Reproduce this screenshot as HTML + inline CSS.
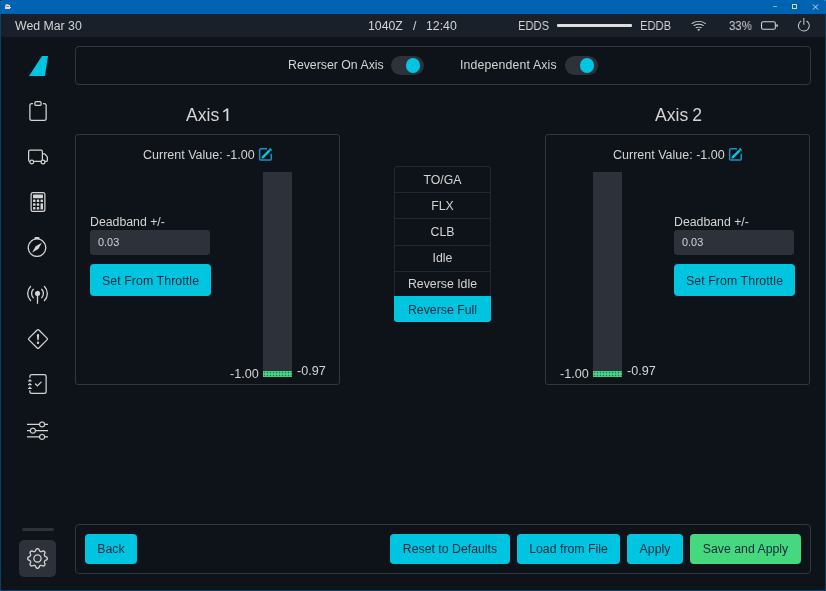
<!DOCTYPE html>
<html><head><meta charset="utf-8">
<style>
*{margin:0;padding:0;box-sizing:border-box}
html,body{width:826px;height:591px;overflow:hidden;background:#0e1219;font-family:"Liberation Sans",sans-serif;color:#d4d4d4}
.a{position:absolute}
.t{position:absolute;white-space:nowrap;line-height:1;will-change:transform}
#win{position:absolute;left:0;top:0;width:826px;height:591px;background:#0e1219}
.panel{position:absolute;border:1px solid #303743;border-radius:4px}
.cyan{background:#00c5e1}
.btn{position:absolute;border-radius:4px;color:#0c2a3f;font-size:12.3px;text-align:center;white-space:nowrap;will-change:transform}
.ico{position:absolute;fill:#d4d4d4}
.sep{position:absolute;left:1px;width:95px;height:1px;background:#232933}
.dl{position:absolute;left:0;width:97px;text-align:center;font-size:12.3px;line-height:1;white-space:nowrap;will-change:transform}
.grn{position:absolute;background-color:#45d87e;background-image:radial-gradient(circle at 1.5px 1.5px,#1f7a6a 0.7px,transparent 1.1px);background-size:3px 3px;background-position:0 0}
</style></head><body>
<div id="win">
<div class="a" style="left:0;top:0;width:826px;height:14px;background:#0063b1"></div>
<div class="a" style="left:0;top:14px;width:1px;height:577px;background:#0b3f66"></div>
<div class="a" style="left:825px;top:14px;width:1px;height:577px;background:#0b3f66"></div>
<div class="a" style="left:0;top:590px;width:826px;height:1px;background:#0b3f66"></div>
<div class="a" style="left:1px;top:14px;width:824px;height:23px;background:#19202a"></div>

<!-- title bar glyphs -->
<svg class="a" style="left:0;top:0" width="826" height="14">
<rect x="5" y="5" width="5" height="4" fill="#e8ddd0"/><rect x="10" y="7" width="1" height="1" fill="#c8c8c8"/><rect x="5.5" y="4" width="3" height="1" fill="#b8b0a8"/><rect x="5" y="5" width="1" height="1" fill="#3ac0c0"/><rect x="6" y="6" width="3" height="1" fill="#8a8580"/><rect x="0" y="0" width="1" height="1" fill="#1a2a3a"/><rect x="824" y="0" width="1" height="1" fill="#30b0c0"/>
<rect x="773" y="6" width="4" height="1" fill="#3ccfd0"/>
<rect x="792.5" y="4.5" width="4" height="4" fill="none" stroke="#d8d0c8" stroke-width="1"/>
<path d="M813 4.5L818 9.5M818 4.5L813 9.5" stroke="#c8e8e0" stroke-width="1"/>
</svg>

<!-- status bar -->
<div class="t" style="left:15px;top:20px;font-size:12.3px">Wed Mar 30</div>
<div class="t" style="left:368px;top:20px;font-size:12.3px">1040Z</div>
<div class="t" style="left:413px;top:20px;font-size:12.3px">/</div>
<div class="t" style="left:426px;top:20px;font-size:12.3px">12:40</div>
<div class="t" style="left:518px;top:20px;font-size:12.3px;transform:scaleX(0.91);transform-origin:0 0">EDDS</div>
<div class="a" style="left:557px;top:24px;width:75px;height:2.5px;background:#dedede;border-radius:1px"></div>
<div class="t" style="left:640px;top:20px;font-size:12.3px;transform:scaleX(0.91);transform-origin:0 0">EDDB</div>
<div class="t" style="left:728.5px;top:20px;font-size:12.3px;transform:scaleX(0.93);transform-origin:0 0">33%</div>

<!-- top panel -->
<div class="panel" style="left:75px;top:46px;width:736px;height:39px"></div>
<div class="t" style="left:288px;top:59px;font-size:12.3px">Reverser On Axis</div>
<div class="a" style="left:391px;top:56px;width:32.5px;height:19px;border-radius:10px;background:#2c313a"></div>
<div class="a cyan" style="left:405.8px;top:58.3px;width:14.5px;height:14.5px;border-radius:50%"></div>
<div class="t" style="left:460px;top:59px;font-size:12.3px;letter-spacing:0.15px">Independent Axis</div>
<div class="a" style="left:565px;top:56px;width:32.5px;height:19px;border-radius:10px;background:#2c313a"></div>
<div class="a cyan" style="left:579.8px;top:58.3px;width:14.5px;height:14.5px;border-radius:50%"></div>

<!-- Axis 1 -->
<div class="t" style="left:186px;top:107px;font-size:17.6px">Axis</div><svg class="a" style="left:220px;top:104px" width="12" height="20" viewBox="220 104 12 20"><rect x="226.5" y="108.5" width="1.8" height="12.5" fill="#d9d9d9"/><path d="M227.2 109.2L223.3 111.9" stroke="#d9d9d9" stroke-width="1.6"/></svg>
<div class="panel" style="left:75px;top:134px;width:265px;height:251px;border-radius:3px"></div>
<div class="t" style="left:142.5px;top:149px;font-size:12.5px">Current Value: -1.00</div>
<svg class="a" style="left:258px;top:146px" width="16" height="16" viewBox="0 0 16 16">
<path d="M9 2.65H2.9A1.25 1.25 0 0 0 1.65 3.9V12.8A1.25 1.25 0 0 0 2.9 14.05H12A1.25 1.25 0 0 0 13.25 12.8V7.8" fill="none" stroke="#1592c4" stroke-width="1.5"/>
<path d="M4.7 11.3L10.9 5.1" stroke="#00c8e6" stroke-width="2.4" stroke-linecap="round"/>
<path d="M12 1.9L14.1 4L13 5.1L10.9 3Z" fill="#00c8e6"/>
</svg>
<div class="a" style="left:263px;top:172px;width:29px;height:205px;background:#2c313a"></div>
<div class="grn" style="left:263px;top:371px;width:29px;height:6px"></div>
<div class="t" style="left:230px;top:368px;font-size:12.6px">-1.00</div>
<div class="t" style="left:297px;top:365px;font-size:12.6px">-0.97</div>
<div class="t" style="left:90px;top:216px;font-size:12.3px">Deadband +/-</div>
<div class="a" style="left:90px;top:230px;width:120px;height:25px;background:#2c313a;border-radius:3px"></div>
<div class="t" style="left:98px;top:237px;font-size:10.9px">0.03</div>
<div class="btn cyan" style="left:90px;top:264px;width:121px;height:32px;line-height:34px;letter-spacing:0.1px">Set From Throttle</div>

<!-- Axis 2 -->
<div class="t" style="left:655px;top:107px;font-size:17.6px;word-spacing:-1px">Axis 2</div>
<div class="panel" style="left:545px;top:134px;width:265px;height:251px;border-radius:3px"></div>
<div class="t" style="left:612.5px;top:149px;font-size:12.5px">Current Value: -1.00</div>
<svg class="a" style="left:728px;top:146px" width="16" height="16" viewBox="0 0 16 16">
<path d="M9 2.65H2.9A1.25 1.25 0 0 0 1.65 3.9V12.8A1.25 1.25 0 0 0 2.9 14.05H12A1.25 1.25 0 0 0 13.25 12.8V7.8" fill="none" stroke="#1592c4" stroke-width="1.5"/>
<path d="M4.7 11.3L10.9 5.1" stroke="#00c8e6" stroke-width="2.4" stroke-linecap="round"/>
<path d="M12 1.9L14.1 4L13 5.1L10.9 3Z" fill="#00c8e6"/>
</svg>
<div class="a" style="left:593px;top:172px;width:29px;height:205px;background:#2c313a"></div>
<div class="grn" style="left:593px;top:371px;width:29px;height:6px"></div>
<div class="t" style="left:560px;top:368px;font-size:12.6px">-1.00</div>
<div class="t" style="left:627px;top:365px;font-size:12.6px">-0.97</div>
<div class="t" style="left:674px;top:216px;font-size:12.3px">Deadband +/-</div>
<div class="a" style="left:674px;top:230px;width:120px;height:25px;background:#2c313a;border-radius:3px"></div>
<div class="t" style="left:682px;top:237px;font-size:10.9px">0.03</div>
<div class="btn cyan" style="left:674px;top:264px;width:121px;height:32px;line-height:34px;letter-spacing:0.1px">Set From Throttle</div>

<!-- detents -->
<div class="a" style="left:394px;top:166px;width:97px;height:156px;border:1px solid #232933;border-radius:3px"></div>
<div class="a" style="left:394px;top:166px;width:97px;height:156px">
<div class="dl" style="top:8.0px">TO/GA</div>
<div class="dl" style="top:33.8px">FLX</div>
<div class="sep" style="top:26.3px"></div>
<div class="dl" style="top:59.9px">CLB</div>
<div class="sep" style="top:52.4px"></div>
<div class="dl" style="top:86.0px">Idle</div>
<div class="sep" style="top:78.5px"></div>
<div class="dl" style="top:112.1px">Reverse Idle</div>
<div class="sep" style="top:104.6px"></div>
<div class="btn cyan" style="left:0;top:130px;width:97px;height:26px;line-height:29px;border-radius:0 0 3px 3px">Reverse Full</div>
</div>

<!-- bottom panel -->
<div class="panel" style="left:75px;top:524px;width:736px;height:50px"></div>
<div class="btn cyan" style="left:85px;top:534px;width:52px;height:30px;line-height:31px">Back</div>
<div class="btn cyan" style="left:390px;top:534px;width:120px;height:30px;line-height:31px">Reset to Defaults</div>
<div class="btn cyan" style="left:517px;top:534px;width:103px;height:30px;line-height:31px">Load from File</div>
<div class="btn cyan" style="left:627px;top:534px;width:56px;height:30px;line-height:31px">Apply</div>
<div class="btn" style="left:690px;top:534px;width:111px;height:30px;line-height:31px;background:#45d87e">Save and Apply</div>

<!-- sidebar -->
<svg class="a" style="left:0;top:0" width="60" height="80"><path d="M42 56H48L45 76H29Z" fill="#00c5e1"/></svg>
<div class="a" style="left:22px;top:528px;width:32px;height:3px;background:#2c313a;border-radius:2px"></div>
<div class="a" style="left:19px;top:540px;width:37px;height:37px;background:#2c313a;border-radius:5px"></div>
<!-- sidebar icons -->
<svg class="ico" style="left:27.5px;top:101px" width="20" height="20" viewBox="0 0 16 16"><path d="M4 1.5H3a2 2 0 0 0-2 2V14a2 2 0 0 0 2 2h10a2 2 0 0 0 2-2V3.5a2 2 0 0 0-2-2h-1v1h1a1 1 0 0 1 1 1V14a1 1 0 0 1-1 1H3a1 1 0 0 1-1-1V3.5a1 1 0 0 1 1-1h1v-1z"/><path d="M9.5 1a.5.5 0 0 1 .5.5v1a.5.5 0 0 1-.5.5h-3a.5.5 0 0 1-.5-.5v-1a.5.5 0 0 1 .5-.5h3zm-3-1A1.5 1.5 0 0 0 5 1.5v1A1.5 1.5 0 0 0 6.5 4h3A1.5 1.5 0 0 0 11 2.5v-1A1.5 1.5 0 0 0 9.5 0h-3z"/></svg>
<svg class="ico" style="left:27.5px;top:146.5px" width="20" height="20" viewBox="0 0 16 16"><path d="M0 3.5A1.5 1.5 0 0 1 1.5 2h9A1.5 1.5 0 0 1 12 3.5V5h1.02a1.5 1.5 0 0 1 1.17.563l1.481 1.85a1.5 1.5 0 0 1 .329.938V10.5a1.5 1.5 0 0 1-1.5 1.5H14a2 2 0 1 1-4 0H5a2 2 0 1 1-3.998-.085A1.5 1.5 0 0 1 0 10.5v-7zm1.294 7.456A1.999 1.999 0 0 1 4.732 11h5.536a2.01 2.01 0 0 1 .732-.732V3.5a.5.5 0 0 0-.5-.5h-9a.5.5 0 0 0-.5.5v7a.5.5 0 0 0 .294.456zM12 10a2 2 0 0 1 1.732 1h.768a.5.5 0 0 0 .5-.5V8.35a.5.5 0 0 0-.11-.312l-1.48-1.85A.5.5 0 0 0 13.02 6H12v4zm-9 1a1 1 0 1 0 0 2 1 1 0 0 0 0-2zm9 0a1 1 0 1 0 0 2 1 1 0 0 0 0-2z"/></svg>
<svg class="ico" style="left:27.6px;top:192px" width="20" height="20" viewBox="0 0 16 16"><path d="M12 1a1 1 0 0 1 1 1v12a1 1 0 0 1-1 1H4a1 1 0 0 1-1-1V2a1 1 0 0 1 1-1h8zM4 0a2 2 0 0 0-2 2v12a2 2 0 0 0 2 2h8a2 2 0 0 0 2-2V2a2 2 0 0 0-2-2H4z"/><path d="M4 2.5a.5.5 0 0 1 .5-.5h7a.5.5 0 0 1 .5.5v2a.5.5 0 0 1-.5.5h-7a.5.5 0 0 1-.5-.5v-2zm0 4a.5.5 0 0 1 .5-.5h1a.5.5 0 0 1 .5.5v1a.5.5 0 0 1-.5.5h-1a.5.5 0 0 1-.5-.5v-1zm0 3a.5.5 0 0 1 .5-.5h1a.5.5 0 0 1 .5.5v1a.5.5 0 0 1-.5.5h-1a.5.5 0 0 1-.5-.5v-1zm0 3a.5.5 0 0 1 .5-.5h1a.5.5 0 0 1 .5.5v1a.5.5 0 0 1-.5.5h-1a.5.5 0 0 1-.5-.5v-1zm3-6a.5.5 0 0 1 .5-.5h1a.5.5 0 0 1 .5.5v1a.5.5 0 0 1-.5.5h-1a.5.5 0 0 1-.5-.5v-1zm0 3a.5.5 0 0 1 .5-.5h1a.5.5 0 0 1 .5.5v1a.5.5 0 0 1-.5.5h-1a.5.5 0 0 1-.5-.5v-1zm0 3a.5.5 0 0 1 .5-.5h1a.5.5 0 0 1 .5.5v1a.5.5 0 0 1-.5.5h-1a.5.5 0 0 1-.5-.5v-1zm3-6a.5.5 0 0 1 .5-.5h1a.5.5 0 0 1 .5.5v1a.5.5 0 0 1-.5.5h-1a.5.5 0 0 1-.5-.5v-1zm0 3a.5.5 0 0 1 .5-.5h1a.5.5 0 0 1 .5.5v4a.5.5 0 0 1-.5.5h-1a.5.5 0 0 1-.5-.5v-4z"/></svg>
<svg class="ico" style="left:27.3px;top:237.2px" width="20" height="20" viewBox="0 0 16 16"><path d="M8 16.016a7.5 7.5 0 0 0 1.962-14.74A1 1 0 0 0 9 0H7a1 1 0 0 0-.962 1.276A7.5 7.5 0 0 0 8 16.016zm6.5-7.5a6.5 6.5 0 1 1-13 0 6.5 6.5 0 0 1 13 0z"/><path d="m6.94 7.44 4.95-2.83-2.83 4.95-4.949 2.83 2.828-4.95z"/></svg>
<svg class="ico" style="left:26.7px;top:283px" width="21" height="21" viewBox="0 0 16 16"><path d="M3.05 3.05a7 7 0 0 0 0 9.9.5.5 0 0 1-.707.707 8 8 0 0 1 0-11.314.5.5 0 0 1 .707.707zm2.122 2.122a4 4 0 0 0 0 5.656.5.5 0 1 1-.708.708 5 5 0 0 1 0-7.072.5.5 0 0 1 .708.708zm5.656-.708a.5.5 0 0 1 .708 0 5 5 0 0 1 0 7.072.5.5 0 1 1-.708-.708 4 4 0 0 0 0-5.656.5.5 0 0 1 0-.708zm2.122-2.12a.5.5 0 0 1 .707 0 8 8 0 0 1 0 11.313.5.5 0 0 1-.707-.707 7 7 0 0 0 0-9.9.5.5 0 0 1 0-.707zM6 8a2 2 0 1 1 2.5 1.937V15.5a.5.5 0 0 1-1 0V9.937A2 2 0 0 1 6 8z"/></svg>
<svg class="ico" style="left:27.5px;top:328.8px" width="20" height="20" viewBox="0 0 16 16"><path d="M6.95.435c.58-.58 1.52-.58 2.1 0l6.515 6.516c.58.58.58 1.519 0 2.098L9.05 15.565c-.58.58-1.519.58-2.098 0L.435 9.05a1.482 1.482 0 0 1 0-2.098L6.95.435zm1.4.7a.495.495 0 0 0-.7 0L1.134 7.65a.495.495 0 0 0 0 .7l6.516 6.516a.495.495 0 0 0 .7 0l6.516-6.516a.495.495 0 0 0 0-.7L8.35 1.134z"/><path d="M7.002 11a1 1 0 1 1 2 0 1 1 0 0 1-2 0zM7.1 4.995a.905.905 0 1 1 1.8 0l-.35 3.507a.552.552 0 0 1-1.1 0L7.1 4.995z"/></svg>
<svg class="ico" style="left:27.6px;top:373.8px" width="20" height="20" viewBox="0 0 16 16"><path fill-rule="evenodd" d="M10.854 6.146a.5.5 0 0 1 0 .708l-3 3a.5.5 0 0 1-.708 0l-1.5-1.5a.5.5 0 1 1 .708-.708L7.5 8.793l2.646-2.647a.5.5 0 0 1 .708 0z"/><path d="M3 0h10a2 2 0 0 1 2 2v12a2 2 0 0 1-2 2H3a2 2 0 0 1-2-2v-1h1v1a1 1 0 0 0 1 1h10a1 1 0 0 0 1-1V2a1 1 0 0 0-1-1H3a1 1 0 0 0-1 1v1H1V2a2 2 0 0 1 2-2z"/><path d="M1 5v-.5a.5.5 0 0 1 1 0V5h.5a.5.5 0 0 1 0 1h-2a.5.5 0 0 1 0-1H1zm0 3v-.5a.5.5 0 0 1 1 0V8h.5a.5.5 0 0 1 0 1h-2a.5.5 0 0 1 0-1H1zm0 3v-.5a.5.5 0 0 1 1 0v.5h.5a.5.5 0 0 1 0 1h-2a.5.5 0 0 1 0-1H1z"/></svg>
<svg class="ico" style="left:27.2px;top:419.9px" width="21" height="20" viewBox="0 0 16 16" preserveAspectRatio="none"><path fill-rule="evenodd" d="M11.5 2a1.5 1.5 0 1 0 0 3 1.5 1.5 0 0 0 0-3zM9.05 3a2.5 2.5 0 0 1 4.9 0H16v1h-2.05a2.5 2.5 0 0 1-4.9 0H0V3h9.05zM4.5 7a1.5 1.5 0 1 0 0 3 1.5 1.5 0 0 0 0-3zM2.05 8a2.5 2.5 0 0 1 4.9 0H16v1H6.95a2.5 2.5 0 0 1-4.9 0H0V8h2.05zm9.45 4a1.5 1.5 0 1 0 0 3 1.5 1.5 0 0 0 0-3zm-2.45 1a2.5 2.5 0 0 1 4.9 0H16v1h-2.05a2.5 2.5 0 0 1-4.9 0H0v-1h9.05z"/></svg>
<svg class="ico" style="left:27.2px;top:548px" width="21" height="21" viewBox="0 0 16 16"><path d="M8 4.754a3.246 3.246 0 1 0 0 6.492 3.246 3.246 0 0 0 0-6.492zM5.754 8a2.246 2.246 0 1 1 4.492 0 2.246 2.246 0 0 1-4.492 0z"/><path d="M9.796 1.343c-.527-1.79-3.065-1.79-3.592 0l-.094.319a.873.873 0 0 1-1.255.52l-.292-.16c-1.64-.892-3.433.902-2.54 2.541l.159.292a.873.873 0 0 1-.52 1.255l-.319.094c-1.79.527-1.79 3.065 0 3.592l.319.094a.873.873 0 0 1 .52 1.255l-.16.292c-.892 1.64.901 3.434 2.541 2.54l.292-.159a.873.873 0 0 1 1.255.52l.094.319c.527 1.79 3.065 1.79 3.592 0l.094-.319a.873.873 0 0 1 1.255-.52l.292.16c1.64.893 3.434-.902 2.54-2.541l-.159-.292a.873.873 0 0 1 .52-1.255l.319-.094c1.79-.527 1.79-3.065 0-3.592l-.319-.094a.873.873 0 0 1-.52-1.255l.16-.292c.893-1.64-.902-3.433-2.541-2.54l-.292.159a.873.873 0 0 1-1.255-.52l-.094-.319zm-2.633.283c.246-.835 1.428-.835 1.674 0l.094.319a1.873 1.873 0 0 0 2.693 1.115l.291-.16c.764-.415 1.6.42 1.184 1.185l-.159.292a1.873 1.873 0 0 0 1.116 2.692l.318.094c.835.246.835 1.428 0 1.674l-.319.094a1.873 1.873 0 0 0-1.115 2.693l.16.291c.415.764-.42 1.6-1.185 1.184l-.291-.159a1.873 1.873 0 0 0-2.693 1.116l-.094.318c-.246.835-1.428.835-1.674 0l-.094-.319a1.873 1.873 0 0 0-2.692-1.115l-.292.16c-.764.415-1.6-.42-1.184-1.185l.159-.291A1.873 1.873 0 0 0 1.945 8.93l-.319-.094c-.835-.246-.835-1.428 0-1.674l.319-.094A1.873 1.873 0 0 0 3.06 4.377l-.16-.292c-.415-.764.42-1.6 1.185-1.184l.292.159a1.873 1.873 0 0 0 2.692-1.115l.094-.319z"/></svg>
<!-- status icons -->
<svg class="ico" style="left:691.4px;top:17.7px" width="15.4" height="15.4" viewBox="0 0 16 16"><path d="M15.384 6.115a.485.485 0 0 0-.047-.736A12.444 12.444 0 0 0 8 3C5.259 3 2.723 3.882.663 5.379a.485.485 0 0 0-.048.736.518.518 0 0 0 .668.05A11.448 11.448 0 0 1 8 4c2.507 0 4.827.802 6.716 2.164.205.148.49.13.668-.049z"/><path d="M13.229 8.271a.482.482 0 0 0-.063-.745A9.455 9.455 0 0 0 8 6c-1.905 0-3.68.56-5.166 1.526a.48.48 0 0 0-.063.745.525.525 0 0 0 .652.065A8.46 8.46 0 0 1 8 7a8.46 8.46 0 0 1 4.576 1.336c.206.132.48.108.653-.065zm-2.183 2.183c.226-.226.185-.605-.1-.75A6.473 6.473 0 0 0 8 9c-1.06 0-2.062.254-2.946.704-.285.145-.326.524-.1.75l.015.015c.16.16.407.19.611.09A5.478 5.478 0 0 1 8 10c.868 0 1.69.201 2.42.56.203.1.45.07.61-.091l.016-.015zM9.06 12.44c.196-.196.198-.52-.04-.66A1.99 1.99 0 0 0 8 11.5a1.99 1.99 0 0 0-1.02.28c-.238.14-.236.464-.04.66l.706.706a.5.5 0 0 0 .707 0l.707-.707z"/></svg>
<svg class="ico" style="left:761px;top:17px" width="17" height="17" viewBox="0 0 16 16"><path d="M0 6a2 2 0 0 1 2-2h10a2 2 0 0 1 2 2v4a2 2 0 0 1-2 2H2a2 2 0 0 1-2-2V6zm2-1a1 1 0 0 0-1 1v4a1 1 0 0 0 1 1h10a1 1 0 0 0 1-1V6a1 1 0 0 0-1-1H2zm14 3a1.5 1.5 0 0 1-1.5 1.5v-3A1.5 1.5 0 0 1 16 8z"/></svg>
<svg class="ico" style="left:795.7px;top:17.2px" width="15.7" height="15.7" viewBox="0 0 16 16"><path d="M7.5 1v7h1V1h-1z"/><path d="M3 8.812a4.999 4.999 0 0 1 2.578-4.375l-.485-.874A6 6 0 1 0 11 3.616l-.501.865A5 5 0 1 1 3 8.812z"/></svg>
</div>
</body></html>
